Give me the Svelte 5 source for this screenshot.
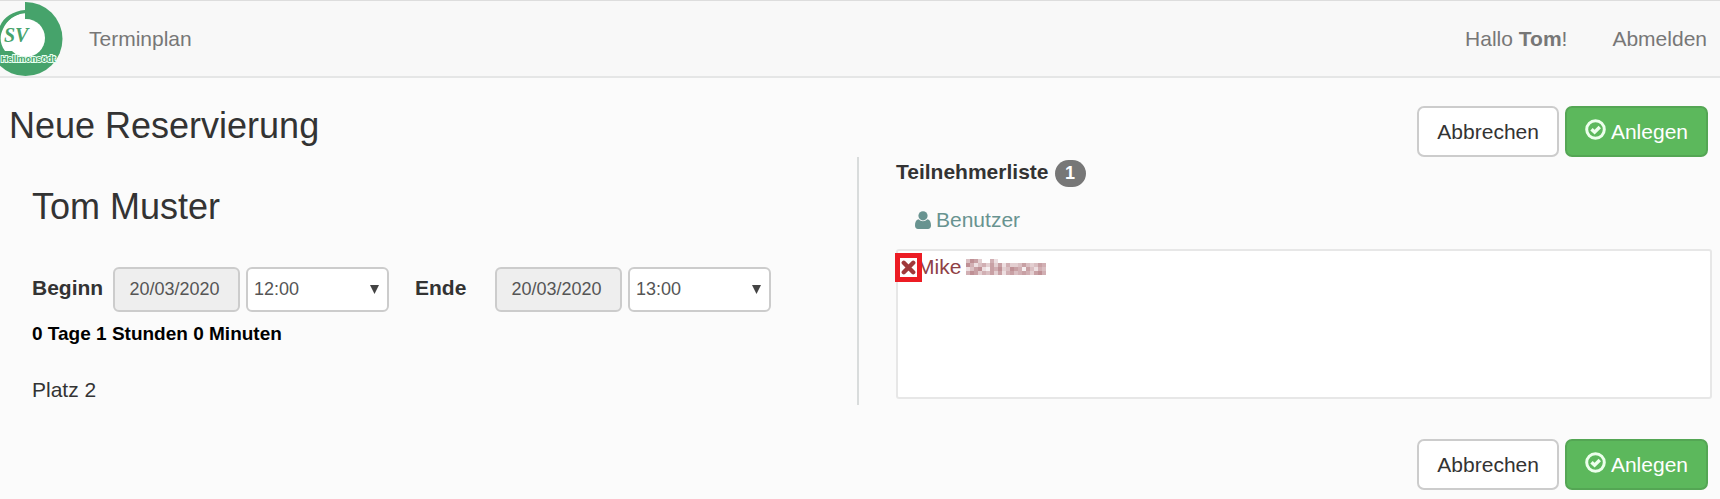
<script>
  const times = ['11:00', '12:00', '13:00', '14:00'];
  let slots = $state([
    { id: 'begin', label: 'Beginn', date: '20/03/2020', time: '12:00' },
    { id: 'end', label: 'Ende', date: '20/03/2020', time: '13:00' }
  ]);

  // Shade of each tile of the obscured surname, 0 is clear and 9 is darkest.
  const tiles = [
    '47630052000000000000',
    '75245363625334643465',
    '24672165734765164254',
    '57635463625645653675'
  ];
</script>

{#snippet actions()}
  <div class="actions">
    <button type="button" class="btn">Abbrechen</button>
    <button type="submit" class="btn primary">
      <svg width="21" height="21" viewBox="0 0 21 21" aria-hidden="true">
        <circle cx="10.5" cy="10.5" r="8.8" fill="none" stroke="currentColor" stroke-width="3" />
        <path d="M6.5 10.2 9.6 13.2 14.8 8" fill="none" stroke="currentColor" stroke-width="3.4" />
      </svg>
      <span>Anlegen</span>
    </button>
  </div>
{/snippet}

<nav>
  <a class="brand" href="#home">
    <svg width="64" height="76" viewBox="0 0 64 76">
      <circle cx="25.500" cy="38" r="37" fill="#46a36b" />
      <path d="M-14 0H25V10C14 11 5 17 0 26L-14 40Z" fill="#f8f8f8" />
      <circle cx="26" cy="37" r="19" fill="#fff" />
      <path d="M25 9V20L12 50H5C-1 42 0 34 3 28C7 19 15 13 25 12Z" fill="#fff" />
      <path d="M25 9C13 10 4 16 0 25V34C3 22 12 13 25 12Z" fill="#46a36b" />
      <text class="mono" x="4" y="41">SV</text>
      <text class="town" x="1" y="61">Hellmonsödt</text>
    </svg>
  </a>
  <a class="link" href="#plan">Terminplan</a>
  <span class="hello">Hallo <b>Tom</b>!</span>
  <a class="link" href="#logout">Abmelden</a>
</nav>

<form onsubmit={(e) => e.preventDefault()}>
  <header>
    <h1>Neue Reservierung</h1>
    {@render actions()}
  </header>

  <div class="columns">
    <section class="booking">
      <h2>Tom Muster</h2>
      <div class="slots">
        {#each slots as slot}
          <div class="slot">
            <label for={slot.id}>{slot.label}</label>
            <input id={slot.id} type="text" readonly value={slot.date} />
            <div class="select">
              <select bind:value={slot.time} aria-label={slot.label}>
                {#each times as time}<option>{time}</option>{/each}
              </select>
              <svg width="9" height="9" viewBox="0 0 9 9" aria-hidden="true"><path d="M0 0H9L4.500 9Z" fill="#444" /></svg>
            </div>
          </div>
        {/each}
      </div>
      <p class="duration">0 Tage 1 Stunden 0 Minuten</p>
      <p class="court">Platz 2</p>
    </section>

    <section class="people">
      <h3>Teilnehmerliste <span class="count">1</span></h3>
      <a class="user" href="#users">
        <svg width="16" height="18" viewBox="0 0 16 18" aria-hidden="true">
          <circle cx="8" cy="4.800" r="4.600" fill="currentColor" />
          <path d="M3.500 8.300C0.800 9 0 11.500 0 14.500C0 16.800 1.200 18 3 18H13C14.800 18 16 16.800 16 14.500C16 11.500 15.200 9 12.500 8.300C9.800 10.800 6.200 10.800 3.500 8.300Z" fill="currentColor" />
        </svg>
        <span>Benutzer</span>
      </a>
      <ul>
        <li>
          <button type="button" class="remove" aria-label="Mike">
            <svg width="15" height="15" viewBox="0 0 15 15" aria-hidden="true">
              <path d="M2.800 2.800 12.200 12.200M12.200 2.800 2.800 12.200" stroke="#a0393b" stroke-width="4.400" stroke-linecap="round" />
            </svg>
          </button>
          <span class="name">Mike</span>
          <svg class="tiles" width="80" height="16" viewBox="0 0 80 16" shape-rendering="crispEdges" aria-hidden="true">
            {#each tiles as row, y}
              {#each row as shade, x}
                <rect x={x * 4} y={y * 4} width="4" height="4" fill="#9a5058" fill-opacity={Number(shade) / 11} />
              {/each}
            {/each}
          </svg>
        </li>
      </ul>
    </section>
  </div>

  <footer>{@render actions()}</footer>
</form>

<style>
  :global(body) {
    background: #fbfbfb;
    color: #333;
    font: 21px/30px "Liberation Sans", Arial, sans-serif;
  }
  a { text-decoration: none; }
  svg { display: block; flex: none; }
  h1, h2, h3, p, ul { margin: 0; padding: 0; font-weight: 400; }

  nav {
    display: flex;
    align-items: center;
    padding-right: 13px;
    background: #f8f8f8;
    border-top: 1px solid #ddd;
    border-bottom: 2px solid #e5e6e6;
    color: #777;
    height: 75px;
  }
  .brand { margin-right: 25px; }
  .link { color: #777; }
  .hello { margin-left: auto; margin-right: 45px; }
  .mono { font: italic 700 20px "Liberation Serif", serif; fill: #46a36b; }
  .town {
    font: 700 9px "Liberation Sans", Arial, sans-serif;
    fill: #46a36b;
    stroke: #e6fff0;
    stroke-width: 2px;
    paint-order: stroke;
  }

  header {
    display: flex;
    justify-content: space-between;
    padding: 28px 12px 0 9px;
  }
  h1 { font-size: 36px; line-height: 40px; }
  .actions { display: flex; gap: 6px; }
  .btn {
    display: flex;
    align-items: center;
    gap: 5px;
    box-sizing: border-box;
    height: 51px;
    padding: 0 18px;
    border: 2px solid #ccc;
    border-radius: 7px;
    background: #fff;
    color: #333;
    font: inherit;
  }
  .primary { background: #5cb85c; border-color: #54a654; color: #fff; }
  .btn svg { color: #ecffec; margin-bottom: 5px; }

  .columns { display: grid; grid-template-columns: 1fr 1fr; margin: 0 8px 0 2px; }
  .booking { padding: 30px 0 0 30px; }
  h2 { font-size: 36px; line-height: 40px; }
  .slots { display: flex; flex-wrap: wrap; gap: 12px 26px; margin-top: 40px; }
  .slot { display: flex; align-items: center; }
  label { width: 81px; font-weight: 700; padding-bottom: 3px; box-sizing: border-box; }
  .slot:not(:first-child) label { width: 80px; }
  input, select {
    box-sizing: border-box;
    height: 45px;
    border: 2px solid #ccc;
    border-radius: 6px;
    color: #555;
    font: 18px "Liberation Sans", Arial, sans-serif;
  }
  input { width: 127px; padding: 0 4px 1px 0; background: #eee; text-align: center; }
  .select { display: grid; align-items: center; width: 143px; margin-left: 6px; }
  select { grid-area: 1 / 1; width: 100%; padding: 0 6px 1px; appearance: none; background: #fff; }
  .select svg { grid-area: 1 / 1; justify-self: end; margin-right: 10px; pointer-events: none; }
  .duration { margin-top: 7px; color: #000; font-size: 19px; font-weight: 700; }
  .court { margin-top: 26px; }

  .people { padding: 0 0 5px 37px; border-left: 2px solid #d9dcdc; }
  h3 { display: flex; align-items: center; gap: 6px; font-size: 21px; font-weight: 700; }
  .count {
    min-width: 31px;
    margin-top: 3px;
    border-radius: 14px;
    background: #777;
    color: #fff;
    font-size: 18px;
    line-height: 27px;
    text-align: center;
  }
  .user { display: flex; align-items: center; gap: 5px; margin: 18px 0 14px 19px; color: #689390; }
  ul {
    box-sizing: border-box;
    min-height: 150px;
    border: 2px solid #e7e7e7;
    border-radius: 3px;
    background: #fff;
    padding-top: 1px;
  }
  li { display: flex; align-items: center; color: #8f4145; }
  .remove {
    position: relative;
    box-sizing: border-box;
    width: 27px;
    height: 29px;
    margin: 0 -5px 0 -3px;
    padding: 1px;
    border: 5px solid #ec1c24;
    background: #fff;
  }
  .name { margin-right: 5px; }

  footer { display: flex; justify-content: flex-end; padding: 34px 12px 10px; }
</style>
